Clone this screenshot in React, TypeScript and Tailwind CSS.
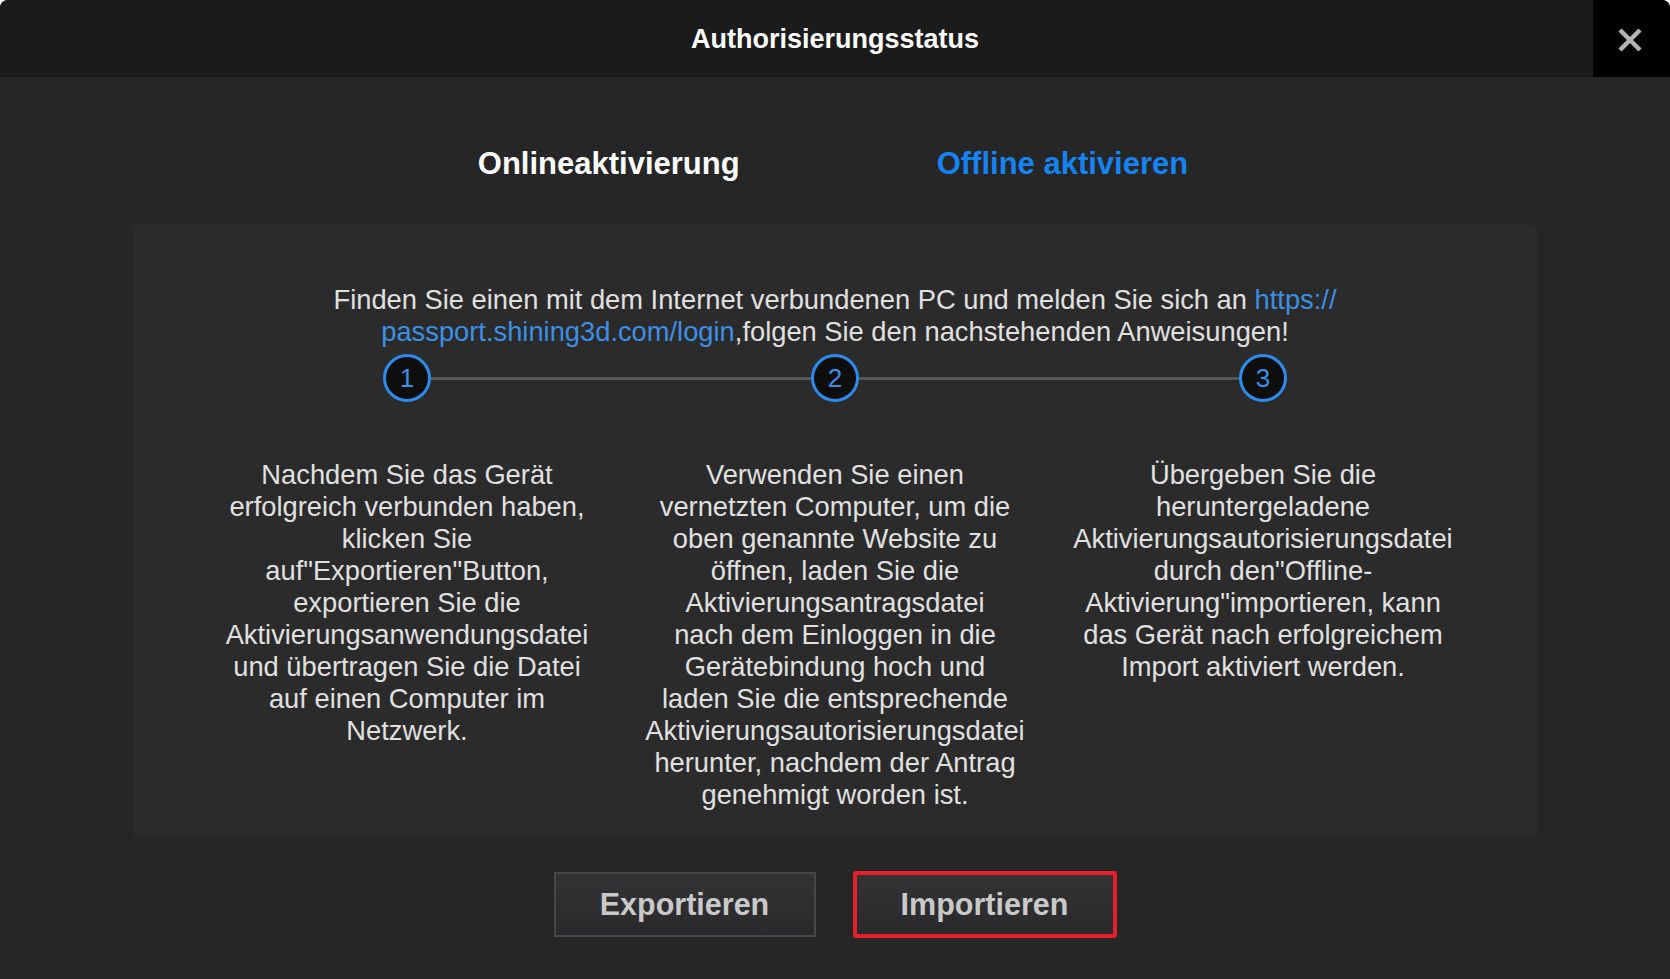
import React from "react";

const steps = [
  [
    "Nachdem Sie das Gerät",
    "erfolgreich verbunden haben,",
    "klicken Sie",
    "auf\"Exportieren\"Button,",
    "exportieren Sie die",
    "Aktivierungsanwendungsdatei",
    "und übertragen Sie die Datei",
    "auf einen Computer im",
    "Netzwerk.",
  ],
  [
    "Verwenden Sie einen",
    "vernetzten Computer, um die",
    "oben genannte Website zu",
    "öffnen, laden Sie die",
    "Aktivierungsantragsdatei",
    "nach dem Einloggen in die",
    "Gerätebindung hoch und",
    "laden Sie die entsprechende",
    "Aktivierungsautorisierungsdatei",
    "herunter, nachdem der Antrag",
    "genehmigt worden ist.",
  ],
  [
    "Übergeben Sie die",
    "heruntergeladene",
    "Aktivierungsautorisierungsdatei",
    "durch den\"Offline-",
    "Aktivierung\"importieren, kann",
    "das Gerät nach erfolgreichem",
    "Import aktiviert werden.",
  ],
];

function StepCircle({ n }: { n: number }) {
  return (
    <div className="w-[48px] h-[48px] shrink-0 rounded-full border-[3px] border-[#2b8ced] bg-[#0e0e0e] flex items-center justify-center text-[26px] leading-none text-[#3a90e8]">
      {n}
    </div>
  );
}

export default function App() {
  return (
    <div
      className="w-[1670px] h-[979px] bg-[#262626] rounded-t-lg overflow-hidden flex flex-col"
      style={{ fontFamily: '"Liberation Sans", Arial, sans-serif' }}
    >
      {/* Header */}
      <div className="relative h-[77px] shrink-0 bg-[#1b1b1b] flex items-center justify-center">
        <h1 className="pt-[2px] text-[27px] font-bold text-white leading-none">Authorisierungsstatus</h1>
        <button className="absolute right-0 top-0 w-[77px] h-[77px] bg-black rounded-tr-lg flex items-center justify-center pr-[4px] pt-[2px]">
          <svg width="26" height="26" viewBox="0 0 26 26">
            <path d="M3 3 L23 23 M23 3 L3 23" stroke="#b4b4b4" strokeWidth="4.5" strokeLinecap="butt" />
          </svg>
        </button>
      </div>

      {/* Tabs */}
      <div className="mt-[69px] flex justify-center gap-[197px] pr-[4px] text-[31px] font-bold leading-[36px]">
        <span className="text-white">Onlineaktivierung</span>
        <span className="text-[#1583f0]">Offline aktivieren</span>
      </div>

      {/* Panel */}
      <div className="mt-[43px] mx-[133px] h-[611px] shrink-0 bg-[#2b2b2b] rounded-sm pt-[59px] text-[#e0e0e0]">
        <p className="text-center text-[27.3px] leading-[32px]">
          Finden Sie einen mit dem Internet verbundenen PC und melden Sie sich an{" "}
          <span className="text-[#3b8fe4]">https://</span>
          <br />
          <span className="text-[#3b8fe4]">passport.shining3d.com/login</span>,folgen Sie den nachstehenden Anweisungen!
        </p>

        <div className="mt-[6px] mx-auto w-[904px] flex items-center">
          <StepCircle n={1} />
          <div className="flex-1 h-[3px] bg-[#575757]" />
          <StepCircle n={2} />
          <div className="flex-1 h-[3px] bg-[#575757]" />
          <StepCircle n={3} />
        </div>

        <div className="mt-[57px] mx-auto w-[1240px] grid grid-cols-3 gap-[44px]">
          {steps.map((lines, i) => (
            <div key={i} className="text-center text-[27.3px] leading-[32px]">
              {lines.map((l, j) => (
                <div key={j}>{l}</div>
              ))}
            </div>
          ))}
        </div>
      </div>

      {/* Buttons */}
      <div className="mt-[36px] flex justify-center gap-[37px]">
        <button className="w-[262px] h-[65px] border-2 border-[#474747] bg-gradient-to-b from-[#333335] to-[#2a2a2c] text-[30.5px] font-bold text-[#c9c9c9]">
          Exportieren
        </button>
        <button className="w-[264px] h-[67px] -mt-px border-4 border-[#e51e2a] rounded-[3px] bg-gradient-to-b from-[#333335] to-[#2a2a2c] text-[30.5px] font-bold text-[#c9c9c9]">
          Importieren
        </button>
      </div>
    </div>
  );
}
